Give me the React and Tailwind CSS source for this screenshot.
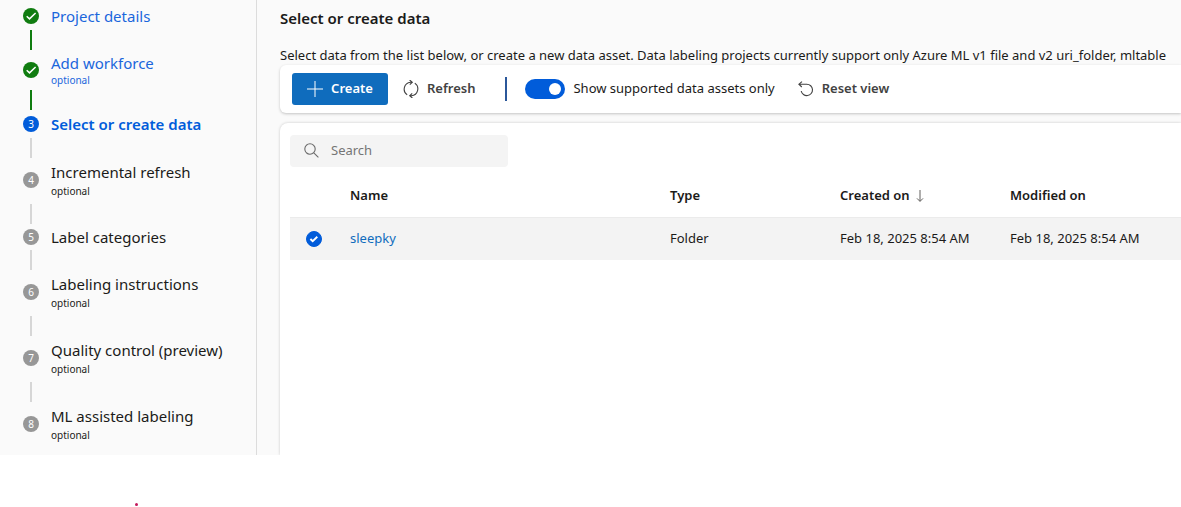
import React, { useState } from "react";

const STEPS = [
  { label: "Project details", state: "done" },
  { label: "Add workforce", state: "done", optional: true },
  { label: "Select or create data", state: "current" },
  { label: "Incremental refresh", state: "upcoming", optional: true },
  { label: "Label categories", state: "upcoming" },
  { label: "Labeling instructions", state: "upcoming", optional: true },
  { label: "Quality control (preview)", state: "upcoming", optional: true },
  { label: "ML assisted labeling", state: "upcoming", optional: true },
];

const ASSETS = [
  { name: "sleepky", type: "Folder", created: "Feb 18, 2025 8:54 AM", modified: "Feb 18, 2025 8:54 AM" },
];

function StepMarker({ state, number }) {
  if (state === "done") {
    return (
      <svg viewBox="0 0 16 16" className="size-4 shrink-0" aria-hidden="true">
        <circle cx="8" cy="8" r="8" fill="#107c10" />
        <path d="M3.7 8.2 6.5 10.9 12.6 5" fill="none" stroke="#fff" strokeWidth="1.5" />
      </svg>
    );
  }
  const fill = state === "current" ? "bg-[#015cda]" : "bg-[#979797]";
  return (
    <span className={`flex size-4 shrink-0 items-center justify-center rounded-full text-[10px] leading-none text-white ${fill}`}>
      {number}
    </span>
  );
}

function Step({ step, number, last }) {
  const done = step.state === "done";
  const current = step.state === "current";
  const body = (
    <>
      <span className={`block text-[15px] ${done ? "leading-5" : "leading-[22px]"} ${current ? "font-semibold" : ""}`}>
        {step.label}
      </span>
      {step.optional && (
        <span className={`block text-[10px] ${done ? "leading-[14px]" : "leading-4"}`}>optional</span>
      )}
    </>
  );
  const pad = !step.optional ? (current ? "py-[3px]" : done ? "pt-[3px] pb-1" : "py-[2px]") : done ? "py-[3px]" : "pt-[3px] pb-[5px]";
  return (
    <li aria-current={current ? "step" : undefined}>
      <div className={`flex items-center gap-3 ${pad}`}>
        <StepMarker state={step.state} number={number} />
        {done ? (
          <a href="#step" className="text-[#1a66dc]">{body}</a>
        ) : (
          <span className={current ? "text-[#015cda]" : "text-[#1b1a19]"}>{body}</span>
        )}
      </div>
      {!last && (
        <div className="flex w-4 justify-center">
          <span className={`h-5 w-[2px] ${done ? "bg-[#107c10]" : "bg-[#d6d6d6]"}`} />
        </div>
      )}
    </li>
  );
}

function PlusIcon() {
  return (
    <svg viewBox="0 0 16 16" className="size-4" fill="none" stroke="currentColor" strokeWidth="1" aria-hidden="true">
      <path d="M8 0v16M0 8h16" />
    </svg>
  );
}

function RefreshIcon() {
  return (
    <svg viewBox="0 0 16 18" className="h-[18px] w-4" fill="none" stroke="currentColor" strokeWidth="1.1" aria-hidden="true">
      <path d="M4.2 14.9A7 7 0 0 1 7.5 2.2h1.6M6.6 0l2.7 2.2-2.5 2.5" />
      <path d="M11.8 3.1A7 7 0 0 1 8.5 15.8H6.9M9.4 18l-2.7-2.2 2.5-2.5" />
    </svg>
  );
}

function ResetIcon() {
  return (
    <svg viewBox="0 0 16 16" className="size-4" fill="none" stroke="currentColor" strokeWidth="1.1" aria-hidden="true">
      <path d="M4 .6.9 3.2 3.8 6M1 3.2h7.8a5.7 5.7 0 1 1-5.6 6.8" />
    </svg>
  );
}

function SearchIcon() {
  return (
    <svg viewBox="0 0 16 16" className="size-4 shrink-0 text-[#6b6b6b]" fill="none" stroke="currentColor" strokeWidth="1.1" aria-hidden="true">
      <circle cx="7" cy="6" r="5.2" />
      <path d="m10.8 9.8 4.6 4.6" />
    </svg>
  );
}

function SortIcon() {
  return (
    <svg viewBox="0 0 8 12" className="h-3 w-2 text-[#605e5c]" fill="none" stroke="currentColor" strokeWidth="1" aria-hidden="true">
      <path d="M4 0v11.2M1 8.4l3 3 3-3" />
    </svg>
  );
}

export default function App() {
  const [supportedOnly, setSupportedOnly] = useState(true);
  const [selected, setSelected] = useState("sleepky");
  const [query, setQuery] = useState("");
  const rows = ASSETS.filter((a) => a.name.includes(query));

  return (
    <div className="overflow-hidden bg-white font-['Noto_Sans','Open_Sans',sans-serif] text-[13px] text-[#1b1a19]">
      <div className="flex bg-[#fafafa]">
        <nav aria-label="Project steps" className="w-[257px] shrink-0 border-r border-[#dcdcdc] pt-[3px] pb-[7px] pl-[23px]">
          <ol>
            {STEPS.map((step, i) => (
              <Step key={step.label} step={step} number={i + 1} last={i === STEPS.length - 1} />
            ))}
          </ol>
        </nav>

        <main className="flex min-w-0 flex-1 flex-col overflow-hidden pl-[23px]">
          <h1 className="pt-[7px] text-[15px] leading-[22px] font-semibold">Select or create data</h1>
          <p className="mt-4 leading-5 whitespace-nowrap">
            Select data from the list below, or create a new data asset. Data labeling projects currently support only Azure ML v1 file and v2 uri_folder, mltable
          </p>

          <div className="flex h-12 shrink-0 items-center rounded-l-md bg-white pl-3 whitespace-nowrap shadow-[0_1px_3px_rgba(0,0,0,0.22)]">
            <button type="button" className="flex h-8 w-24 items-center justify-center gap-2 rounded-[3px] bg-[#0f6cbd] font-semibold text-white">
              <PlusIcon />
              Create
            </button>
            <button type="button" className="ml-[15px] flex items-center gap-2 font-semibold text-[#424242]">
              <RefreshIcon />
              Refresh
            </button>
            <span className="ml-[30px] h-6 w-[2px] bg-[#2b579a]" />
            <label className="ml-[18px] flex items-center gap-2">
              <input
                type="checkbox"
                role="switch"
                checked={supportedOnly}
                onChange={(e) => setSupportedOnly(e.target.checked)}
                className="flex h-5 w-10 appearance-none items-center rounded-full bg-[#8a8886] px-1 before:size-3 before:rounded-full before:bg-white checked:justify-end checked:bg-[#015cda]"
              />
              Show supported data assets only
            </label>
            <button type="button" className="ml-[23px] flex items-center gap-2 font-semibold text-[#424242]">
              <ResetIcon />
              Reset view
            </button>
          </div>

          <section className="mt-[10px] flex-1 rounded-tl-lg bg-white pt-3 pl-[10px] shadow-[0_0_3px_rgba(0,0,0,0.2)]">
            <label className="flex h-8 w-[218px] items-center gap-3 rounded bg-[#f4f4f4] px-[13px]">
              <SearchIcon />
              <input
                type="text"
                aria-label="Search"
                placeholder="Search"
                value={query}
                onChange={(e) => setQuery(e.target.value)}
                className="min-w-0 flex-1 bg-transparent outline-none placeholder:text-[#757575]"
              />
            </label>

            <table className="mt-2 w-full table-fixed text-left">
              <thead>
                <tr className="h-[42px] border-b border-[#ebebeb]">
                  <td className="w-[60px]" />
                  <th className="w-80 font-semibold">Name</th>
                  <th className="w-[170px] font-semibold">Type</th>
                  <th className="w-[170px] font-semibold" aria-sort="descending">
                    <span className="flex items-center gap-[6px]">
                      Created on
                      <SortIcon />
                    </span>
                  </th>
                  <th className="font-semibold">Modified on</th>
                </tr>
              </thead>
              <tbody>
                {rows.map((a) => (
                  <tr key={a.name} className="h-[43px] bg-[#f3f3f3]">
                    <td className="pl-4">
                      <span className="grid size-4 place-items-center">
                        <input
                          type="radio"
                          name="asset"
                          aria-label={`Select ${a.name}`}
                          checked={selected === a.name}
                          onChange={() => setSelected(a.name)}
                          className="col-start-1 row-start-1 size-4 appearance-none rounded-full border border-[#8a8886] checked:border-[#015cda] checked:bg-[#015cda]"
                        />
                        <svg viewBox="0 0 16 16" className="pointer-events-none col-start-1 row-start-1 size-4" aria-hidden="true">
                          <path d="m4.4 8 2.3 2.2 4.6-4.4" fill="none" stroke="#fff" strokeWidth="1.9" />
                        </svg>
                      </span>
                    </td>
                    <td><a href="#sleepky" className="text-[#0f6cbd]">{a.name}</a></td>
                    <td>{a.type}</td>
                    <td>{a.created}</td>
                    <td>{a.modified}</td>
                  </tr>
                ))}
              </tbody>
            </table>
          </section>
        </main>
      </div>

      <footer className="pt-12 pb-[1px] pl-[135px]">
        <span className="block size-[3px] rounded-full bg-[#c2185b]" />
      </footer>
    </div>
  );
}
